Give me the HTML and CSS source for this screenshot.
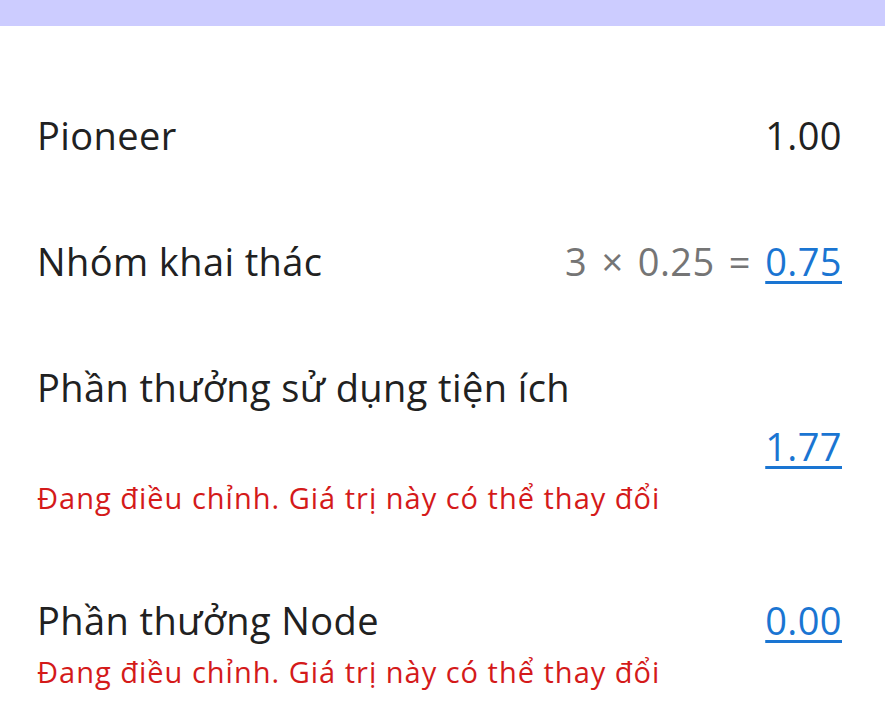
FILE: index.html
```html
<!DOCTYPE html>
<html lang="vi">
<head>
<meta charset="utf-8">
<link rel="stylesheet" href="styles.css">
</head>
<body>
<div class="topbar"></div>
<main class="list">
  <section class="item">
    <div class="row">
      <span class="label">Pioneer</span>
      <span class="value">1.00</span>
    </div>
  </section>
  <section class="item">
    <div class="row">
      <span class="label">Nhóm khai thác</span>
      <span class="value"><span class="calc">3 × 0.25 = </span><a class="link">0.75</a></span>
    </div>
  </section>
  <section class="item">
    <div class="label">Phần thưởng sử dụng tiện ích</div>
    <div class="row row-end">
      <a class="link">1.77</a>
    </div>
    <div class="note">Đang điều chỉnh. Giá trị này có thể thay đổi</div>
  </section>
  <section class="item">
    <div class="row">
      <span class="label">Phần thưởng Node</span>
      <a class="link">0.00</a>
    </div>
    <div class="note">Đang điều chỉnh. Giá trị này có thể thay đổi</div>
  </section>
</main>
</body>
</html>
```
FILE: styles.css
```css
html, body {
  margin: 0;
  padding: 0;
  background: #ffffff;
}
body {
  font-family: "Open Sans", "Noto Sans", sans-serif;
  color: #212121;
}
.topbar {
  height: 26px;
  background: #ccccff;
}
.list {
  display: flex;
  flex-direction: column;
  gap: 78px;
  padding: 85px 43px 0 37px;
}
.item {
  display: flex;
  flex-direction: column;
}
.row {
  display: flex;
  justify-content: space-between;
  align-items: baseline;
  font-size: 38px;
  line-height: 48px;
  letter-spacing: 0.4px;
}
.row-end {
  justify-content: flex-end;
  margin-top: 11px;
}
.label {
  font-size: 38px;
  line-height: 48px;
  letter-spacing: 0.4px;
}
.value {
  font-size: 38px;
}
.calc {
  color: #757575;
  word-spacing: 4px;
}
.link {
  color: #1a75d2;
  text-decoration: underline;
  text-decoration-thickness: 3px;
  text-underline-offset: 5px;
}
.note {
  margin-top: 8px;
  font-size: 29px;
  line-height: 40px;
  letter-spacing: 1px;
  color: #d41a1a;
}
```
